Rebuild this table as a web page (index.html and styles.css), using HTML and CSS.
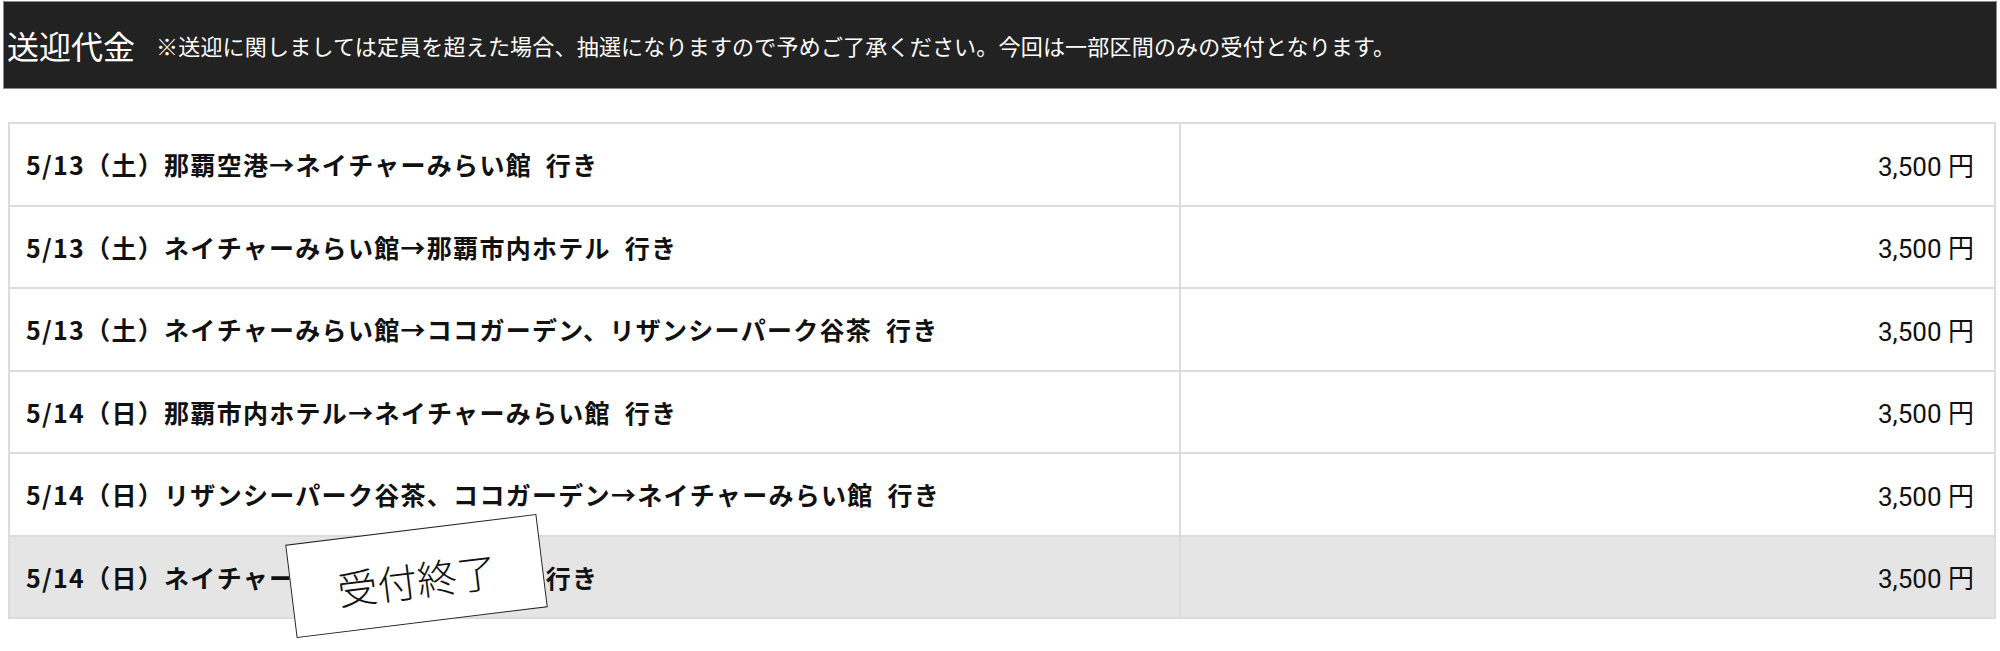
FILE: index.html
```html
<!DOCTYPE html>
<html lang="ja">
<head>
<meta charset="utf-8">
<title>送迎代金</title>
<link rel="stylesheet" href="styles.css">
</head>
<body>
<div class="page">
  <div class="header">
    <span class="title">送迎代金</span>
    <span class="note">※送迎に関しましては定員を超えた場合、抽選になりますので予めご了承ください。今回は一部区間のみの受付となります。</span>
  </div>
  <div class="table-wrap">
    <table class="fares">
      <colgroup><col class="col-route"><col class="col-price"></colgroup>
      <tr><td class="route">5/13（土）那覇空港→ネイチャーみらい館&ensp;行き</td><td class="price">3,500 円</td></tr>
      <tr><td class="route">5/13（土）ネイチャーみらい館→那覇市内ホテル&ensp;行き</td><td class="price">3,500 円</td></tr>
      <tr><td class="route">5/13（土）ネイチャーみらい館→ココガーデン、リザンシーパーク谷茶&ensp;行き</td><td class="price">3,500 円</td></tr>
      <tr><td class="route">5/14（日）那覇市内ホテル→ネイチャーみらい館&ensp;行き</td><td class="price">3,500 円</td></tr>
      <tr><td class="route">5/14（日）リザンシーパーク谷茶、ココガーデン→ネイチャーみらい館&ensp;行き</td><td class="price">3,500 円</td></tr>
      <tr class="closed"><td class="route">5/14（日）ネイチャーみらい館→那覇空港&ensp;行き</td><td class="price">3,500 円</td></tr>
    </table>
    <div class="stamp">受付終了</div>
  </div>
</div>
</body>
</html>
```

FILE: styles.css
```css
html, body {
  margin: 0;
  padding: 0;
  background: #fff;
}

body {
  min-height: 100vh;
}

.page {
  padding: 1px 3px 40px 3px;
  font-family: "Noto Sans CJK JP", "Noto Sans", sans-serif;
}

.header {
  background: #222;
  border: 1px solid #8a8a8a;
  height: 86px;
  display: flex;
  align-items: center;
  padding-left: 3px;
  color: #fff;
  white-space: nowrap;
}

.title {
  font-size: 32px;
  line-height: 1;
  margin-right: 21px;
}

.note {
  font-size: 22px;
  line-height: 1;
  letter-spacing: 0.2px;
}

.table-wrap {
  position: relative;
  margin: 33px 1px 0 5px;
}

.fares {
  width: 100%;
  border-collapse: collapse;
  table-layout: fixed;
}

.col-route {
  width: 1171px;
}

.fares td {
  border: 2px solid #dcdcdc;
  height: 80.5px;
  padding: 0;
  vertical-align: middle;
}

.fares td.route {
  padding-left: 16px;
  font-weight: bold;
  font-size: 25px;
  letter-spacing: 1.3px;
  color: #111;
  white-space: nowrap;
}

.fares td.price {
  text-align: right;
  padding-right: 20px;
  font-family: "Roboto", "Noto Sans CJK JP", sans-serif;
  font-size: 26px;
  color: #111;
}

.closed td {
  background: #e5e5e5;
}

.stamp {
  position: absolute;
  left: 282px;
  top: 407px;
  width: 253px;
  height: 94px;
  box-sizing: border-box;
  padding-top: 6px;
  border: 1px solid #222;
  background: #fff;
  transform: rotate(-7deg);
  display: flex;
  align-items: center;
  justify-content: center;
  font-size: 40px;
  font-weight: 300;
  color: #111;
}
```
